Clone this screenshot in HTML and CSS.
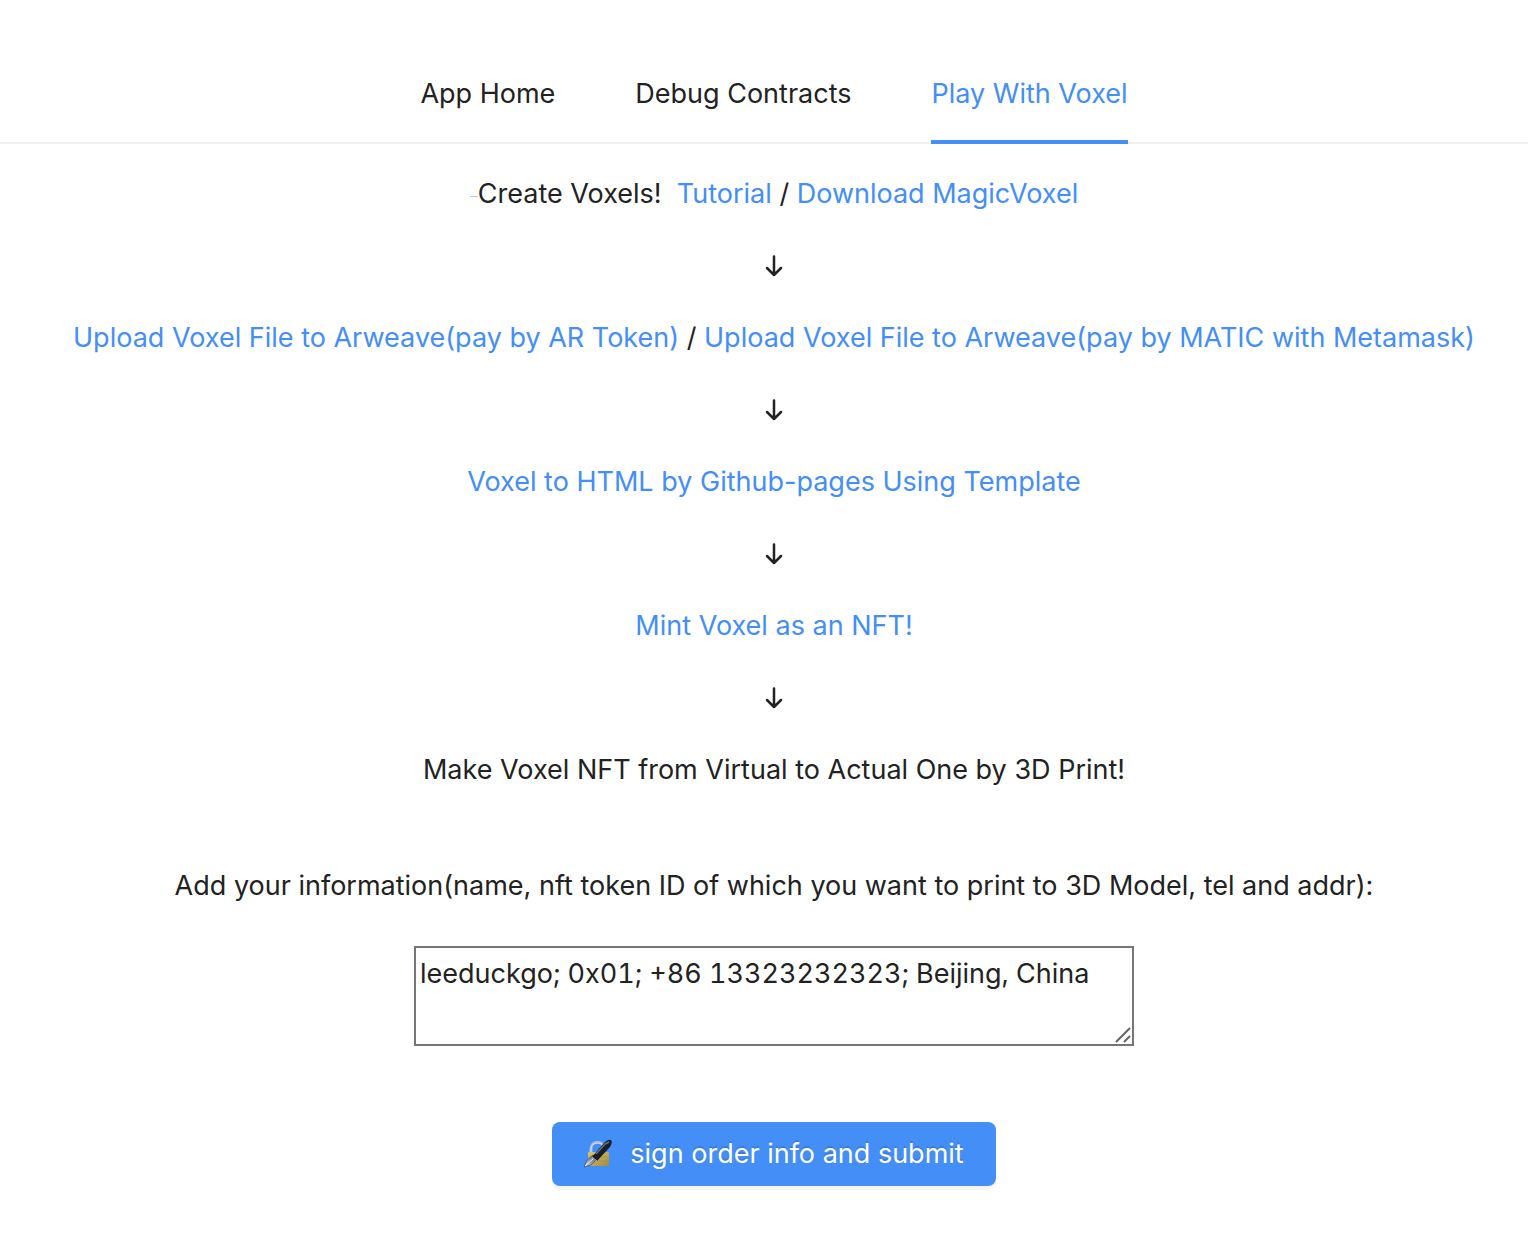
FILE: index.html
```html
<!DOCTYPE html>
<html lang="en">
<head>
<meta charset="utf-8">
<meta name="viewport" content="width=device-width, initial-scale=1">
<title>Play With Voxel</title>
<link rel="stylesheet" href="styles.css">
</head>
<body>
<nav class="tabs">
  <a class="tab" href="#home">App Home</a>
  <a class="tab" href="#debug">Debug Contracts</a>
  <a class="tab tab-active" href="#voxel" aria-current="page">Play With Voxel</a>
</nav>
<main class="content">
  <div class="steps">
    <p class="step"><span class="dash"></span>Create Voxels!&nbsp; <a href="#tutorial">Tutorial</a> / <a href="#download">Download MagicVoxel</a></p>
    <svg class="arrow" viewBox="0 0 20 44" aria-hidden="true"><path d="M10 12.500V31M3 24L10 31L17 24"/></svg>
    <p class="step"><a href="#upload-ar">Upload Voxel File to Arweave(pay by AR Token)</a> / <a href="#upload-matic">Upload Voxel File to Arweave(pay by MATIC with Metamask)</a></p>
    <svg class="arrow" viewBox="0 0 20 44" aria-hidden="true"><path d="M10 12.500V31M3 24L10 31L17 24"/></svg>
    <p class="step"><a href="#template">Voxel to HTML by Github-pages Using Template</a></p>
    <svg class="arrow" viewBox="0 0 20 44" aria-hidden="true"><path d="M10 12.500V31M3 24L10 31L17 24"/></svg>
    <p class="step"><a href="#mint">Mint Voxel as an NFT!</a></p>
    <svg class="arrow" viewBox="0 0 20 44" aria-hidden="true"><path d="M10 12.500V31M3 24L10 31L17 24"/></svg>
    <p class="step">Make Voxel NFT from Virtual to Actual One by 3D Print!</p>
  </div>
  <form class="order">
    <label class="order-label" for="info">Add your information(name, nft token ID of which you want to print to 3D Model, tel and addr):</label>
    <div class="field">
      <textarea class="info" id="info" spellcheck="false">leeduckgo; 0x01; +86 13323232323; Beijing, China</textarea>
      <svg class="grip" viewBox="0 0 16 16" aria-hidden="true"><path d="M1 15L15 1M9 15L15 9"/></svg>
    </div>
    <button class="submit" type="button">
      <svg class="lock-pen" viewBox="0 0 30 30" aria-hidden="true">
        <defs>
          <linearGradient id="brass" x1="0" y1="0" x2="1" y2="1"><stop offset="0" stop-color="#ddc570"/><stop offset="1" stop-color="#a08c3e"/></linearGradient>
          <linearGradient id="nib" x1="0" y1="1" x2="1" y2="0"><stop offset="0" stop-color="#c5d0df"/><stop offset="1" stop-color="#59616d"/></linearGradient>
        </defs>
        <path d="M7 14V10C7 1 20 1 20 10V14" fill="none" stroke="#a5bad2" stroke-width="3"/>
        <path d="M7 13V10C7 2 20 2 20 10" fill="none" stroke="#d7dfe7" stroke-width="1"/>
        <rect x="4" y="13" width="21" height="14" rx="1" fill="url(#brass)"/>
        <path d="M4 18H25M4 22H25" stroke="#8f823f" stroke-opacity=".35"/>
        <path d="M0 28L3 21L9 16L13 20L7 26Z" fill="url(#nib)" stroke="#3e4b5c" stroke-width=".7"/>
        <path d="M1 27L10 19" stroke="#eef3f8" stroke-width="1"/>
        <path d="M8 18L20 4Q24 0 27 1Q29 3 26 8L13 22Z" fill="#191e29"/>
        <path d="M12 15L21 5L25 3" fill="none" stroke="#687384" stroke-width="1.500"/>
        <path d="M8 18L13 22" stroke="#9eabb9" stroke-width="1"/>
      </svg>
      <span>sign order info and submit</span>
    </button>
  </form>
</main>
</body>
</html>
```
FILE: styles.css
```css
* {
  box-sizing: border-box;
}

body {
  margin: 0;
  background: #fff;
  color: #222;
  font-family: Inter, "Liberation Sans", sans-serif;
  font-size: 27px;
  line-height: 44px;
}

a {
  color: #448ef7;
  text-decoration: none;
}

.tabs {
  display: flex;
  justify-content: center;
  gap: 80px;
  padding: 48px 0 0 20px;
  border-bottom: 2px solid #f0f0f0;
}

.tab {
  padding: 24px 0;
  margin-bottom: -2px;
  border-bottom: 4px solid transparent;
  color: #222;
}

.tab-active {
  border-color: #448ef7;
  color: #448ef7;
}

.content {
  padding: 28px 0 52px 20px;
}

.steps {
  display: flex;
  flex-direction: column;
  align-items: center;
  gap: 28px;
}

.step {
  margin: 0;
  text-align: center;
}

.dash {
  display: inline-block;
  width: 8px;
  height: 1px;
  background: #ccc;
  vertical-align: 6px;
}

.arrow {
  width: 20px;
  height: 44px;
  fill: none;
  stroke: #222;
  stroke-width: 2.500;
  stroke-linecap: round;
  stroke-linejoin: round;
}

.order {
  display: flex;
  flex-direction: column;
  align-items: center;
  margin-top: 72px;
}

.order-label {
  text-align: center;
}

.field {
  position: relative;
  width: 720px;
  max-width: 100%;
  margin: 38px 0 76px;
}

.info {
  display: block;
  width: 100%;
  height: 100px;
  padding: 4px;
  border: 2px solid #767676;
  border-radius: 0;
  outline: 0;
  background: #fff;
  color: inherit;
  font: inherit;
  font-variant-numeric: tabular-nums;
  resize: none;
}

.grip {
  position: absolute;
  right: 3px;
  bottom: 3px;
  width: 16px;
  height: 16px;
  stroke: #666;
  stroke-width: 2;
  pointer-events: none;
}

.submit {
  display: flex;
  align-items: center;
  gap: 16px;
  height: 64px;
  padding: 0 32px;
  border: 0;
  border-radius: 8px;
  background: #448ef7;
  box-shadow: 0 4px 0 rgba(0, 0, 0, 0.04);
  color: #fff;
  font: inherit;
  text-shadow: 0 -2px 0 rgba(0, 0, 0, 0.12);
}

.lock-pen {
  width: 30px;
  height: 30px;
}
```
